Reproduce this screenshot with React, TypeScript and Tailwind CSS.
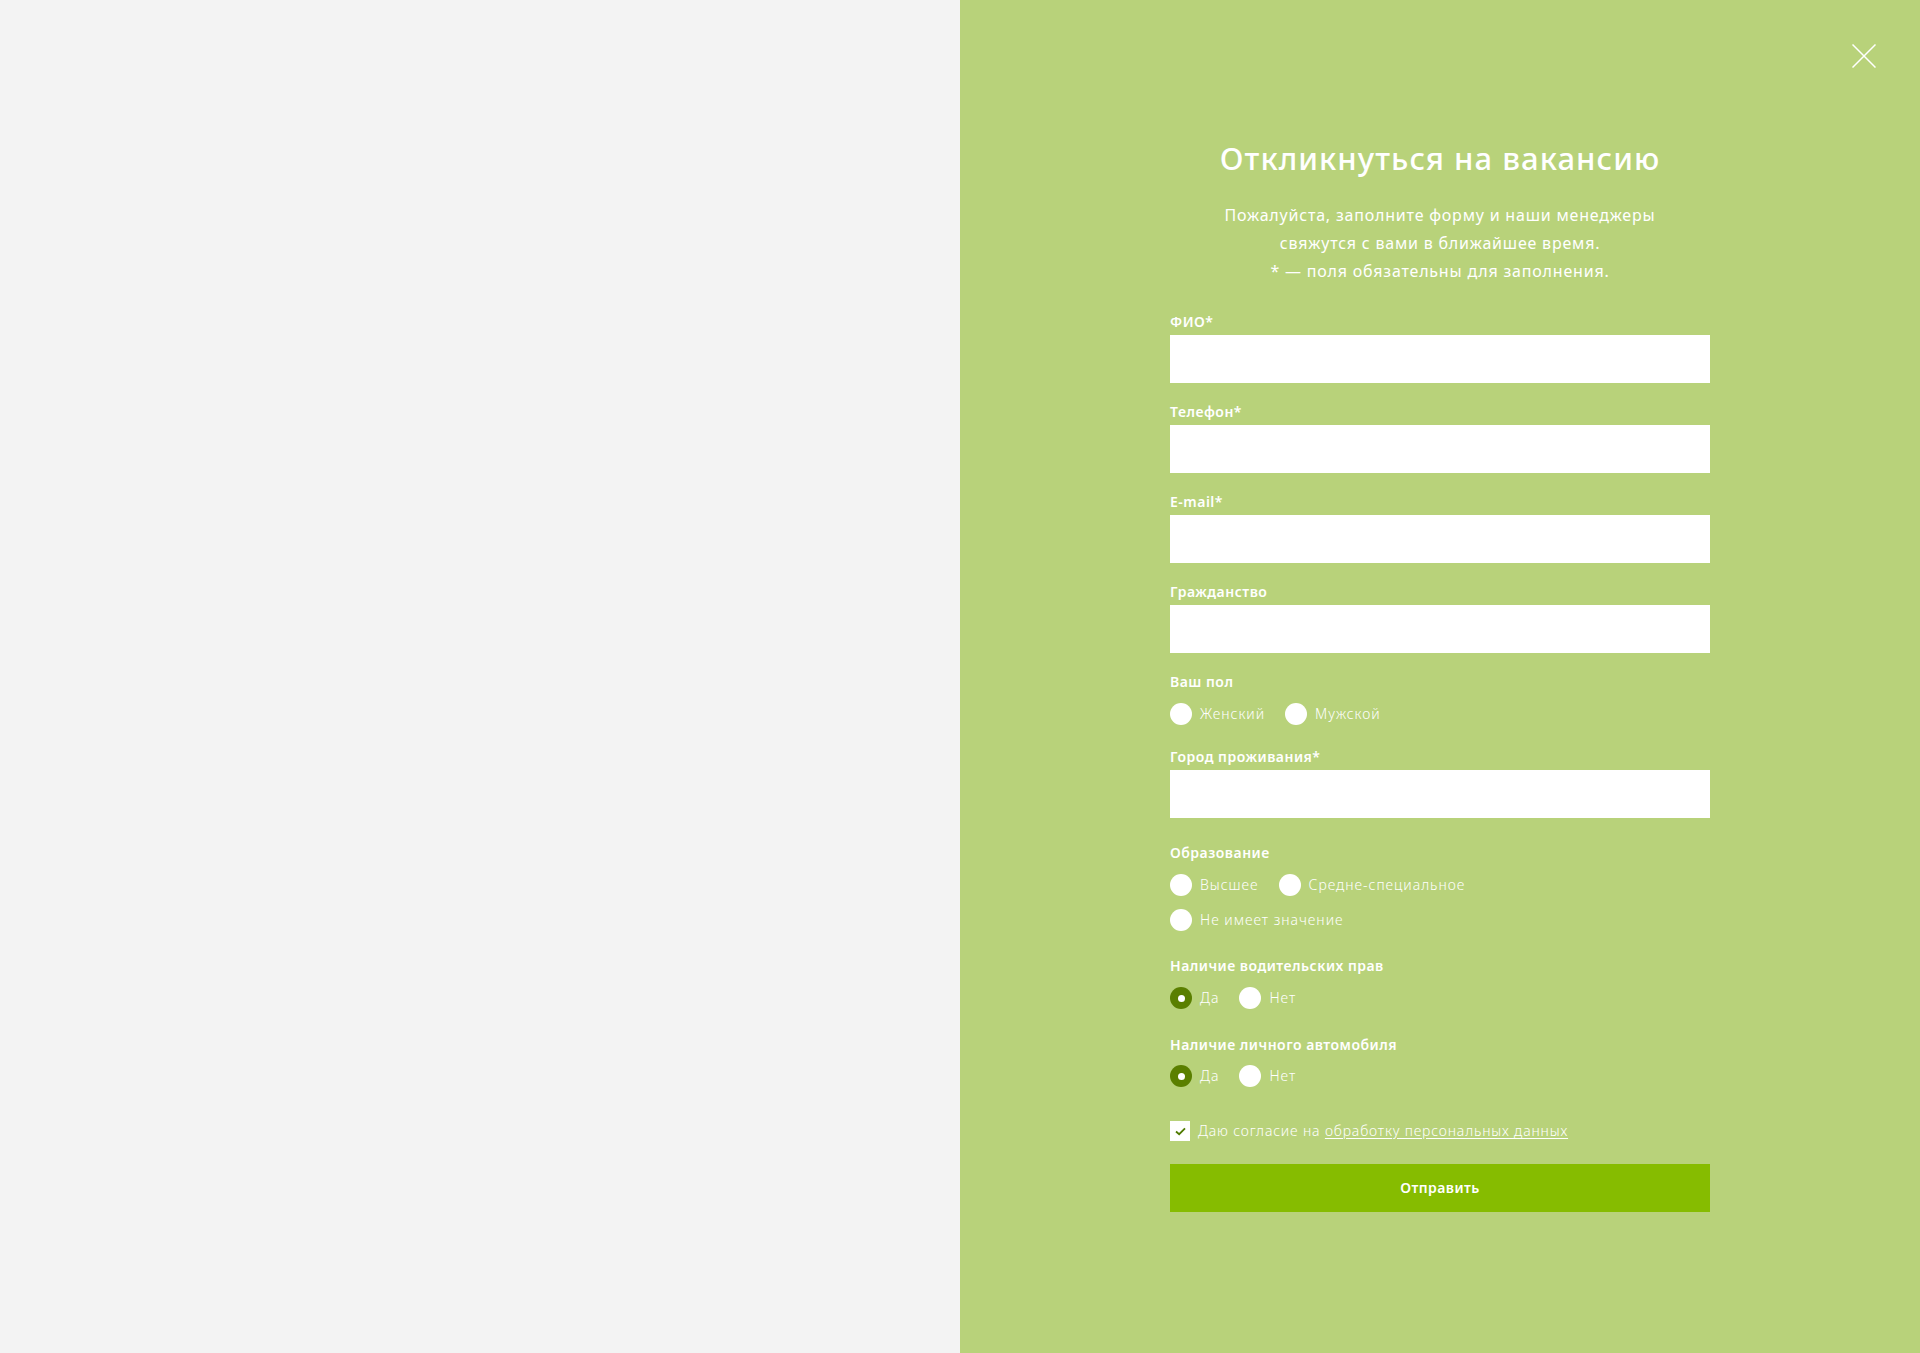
import React from "react";

const font = { fontFamily: '"Noto Sans", "Open Sans", Arial, sans-serif' };

function Field({ label, className = "" }: { label: string; className?: string }) {
  return (
    <div className={className}>
      <label className="block text-sm font-semibold leading-[17px] text-white mb-[5px] tracking-[0.035em]">
        {label}
      </label>
      <input type="text" className="block w-full h-12 bg-white outline-none px-4 text-sm" />
    </div>
  );
}

function Radio({ label, checked = false }: { label: string; checked?: boolean }) {
  return (
    <label className="flex items-center gap-2 cursor-pointer">
      <span
        className={
          checked
            ? "w-[22px] h-[22px] rounded-full bg-[#5a7f00] flex items-center justify-center shrink-0"
            : "w-[22px] h-[22px] rounded-full bg-white shrink-0"
        }
      >
        {checked && <span className="w-[7px] h-[7px] rounded-full bg-white" />}
      </span>
      <span className="text-sm font-light text-white leading-[22px] tracking-[0.07em]">{label}</span>
    </label>
  );
}

function GroupTitle({ children }: { children: React.ReactNode }) {
  return <p className="text-sm font-semibold leading-[17px] text-white tracking-[0.035em]">{children}</p>;
}

export default function App() {
  return (
    <div className="flex min-h-screen w-full" style={font}>
      <div className="w-1/2 bg-[#f3f3f3]" />
      <div className="w-1/2 bg-[#b8d27a] relative min-h-[1353px]">
        <button className="absolute top-[44px] right-[44px] w-6 h-6" aria-label="Закрыть">
          <svg viewBox="0 0 24 24" width="24" height="24" fill="none" stroke="#fff" strokeWidth="1.5">
            <path d="M0.5 0.5 L23.5 23.5 M23.5 0.5 L0.5 23.5" />
          </svg>
        </button>

        <div className="w-[540px] mx-auto pt-[138px]">
          <h2 className="text-center text-[31px] leading-[40px] font-medium text-white tracking-[0.034em]">
            Откликнуться на вакансию
          </h2>
          <p className="mt-[23px] text-center text-base leading-[28px] text-white tracking-[0.05em]">
            Пожалуйста, заполните форму и наши менеджеры
            <br />
            свяжутся с вами в ближайшее время.
            <br />* — поля обязательны для заполнения.
          </p>

          <form className="mt-[28px]" onSubmit={(e) => e.preventDefault()}>
            <Field label="ФИО*" />
            <Field label="Телефон*" className="mt-5" />
            <Field label="E-mail*" className="mt-5" />
            <Field label="Гражданство" className="mt-5" />

            <div className="mt-5">
              <GroupTitle>Ваш пол</GroupTitle>
              <div className="flex gap-5 mt-[13px]">
                <Radio label="Женский" />
                <Radio label="Мужской" />
              </div>
            </div>

            <Field label="Город проживания*" className="mt-[23px]" />

            <div className="mt-[26px]">
              <GroupTitle>Образование</GroupTitle>
              <div className="flex flex-wrap gap-x-5 gap-y-[13px] mt-[13px] w-[330px]">
                <Radio label="Высшее" />
                <Radio label="Средне-специальное" />
                <Radio label="Не имеет значение" />
              </div>
            </div>

            <div className="mt-[26px]">
              <GroupTitle>Наличие водительских прав</GroupTitle>
              <div className="flex gap-5 mt-[13px]">
                <Radio label="Да" checked />
                <Radio label="Нет" />
              </div>
            </div>

            <div className="mt-[27px]">
              <GroupTitle>Наличие личного автомобиля</GroupTitle>
              <div className="flex gap-5 mt-[12px]">
                <Radio label="Да" checked />
                <Radio label="Нет" />
              </div>
            </div>

            <label className="flex items-center gap-2 mt-[34px]">
              <span className="w-5 h-5 bg-white flex items-center justify-center shrink-0">
                <svg viewBox="0 0 12 10" width="11" height="9" fill="none" stroke="#4f7a00" strokeWidth="2">
                  <path d="M1 5 L4.5 8 L11 1.5" />
                </svg>
              </span>
              <span className="text-sm font-light text-white leading-5 tracking-[0.06em]">
                Даю согласие на{" "}
                <a href="#" className="underline underline-offset-2">
                  обработку персональных данных
                </a>
              </span>
            </label>

            <button
              type="submit"
              className="mt-[23px] w-full h-12 bg-[#86bc00] text-white text-sm font-semibold tracking-[0.03em]"
            >
              Отправить
            </button>
          </form>
        </div>
      </div>
    </div>
  );
}
